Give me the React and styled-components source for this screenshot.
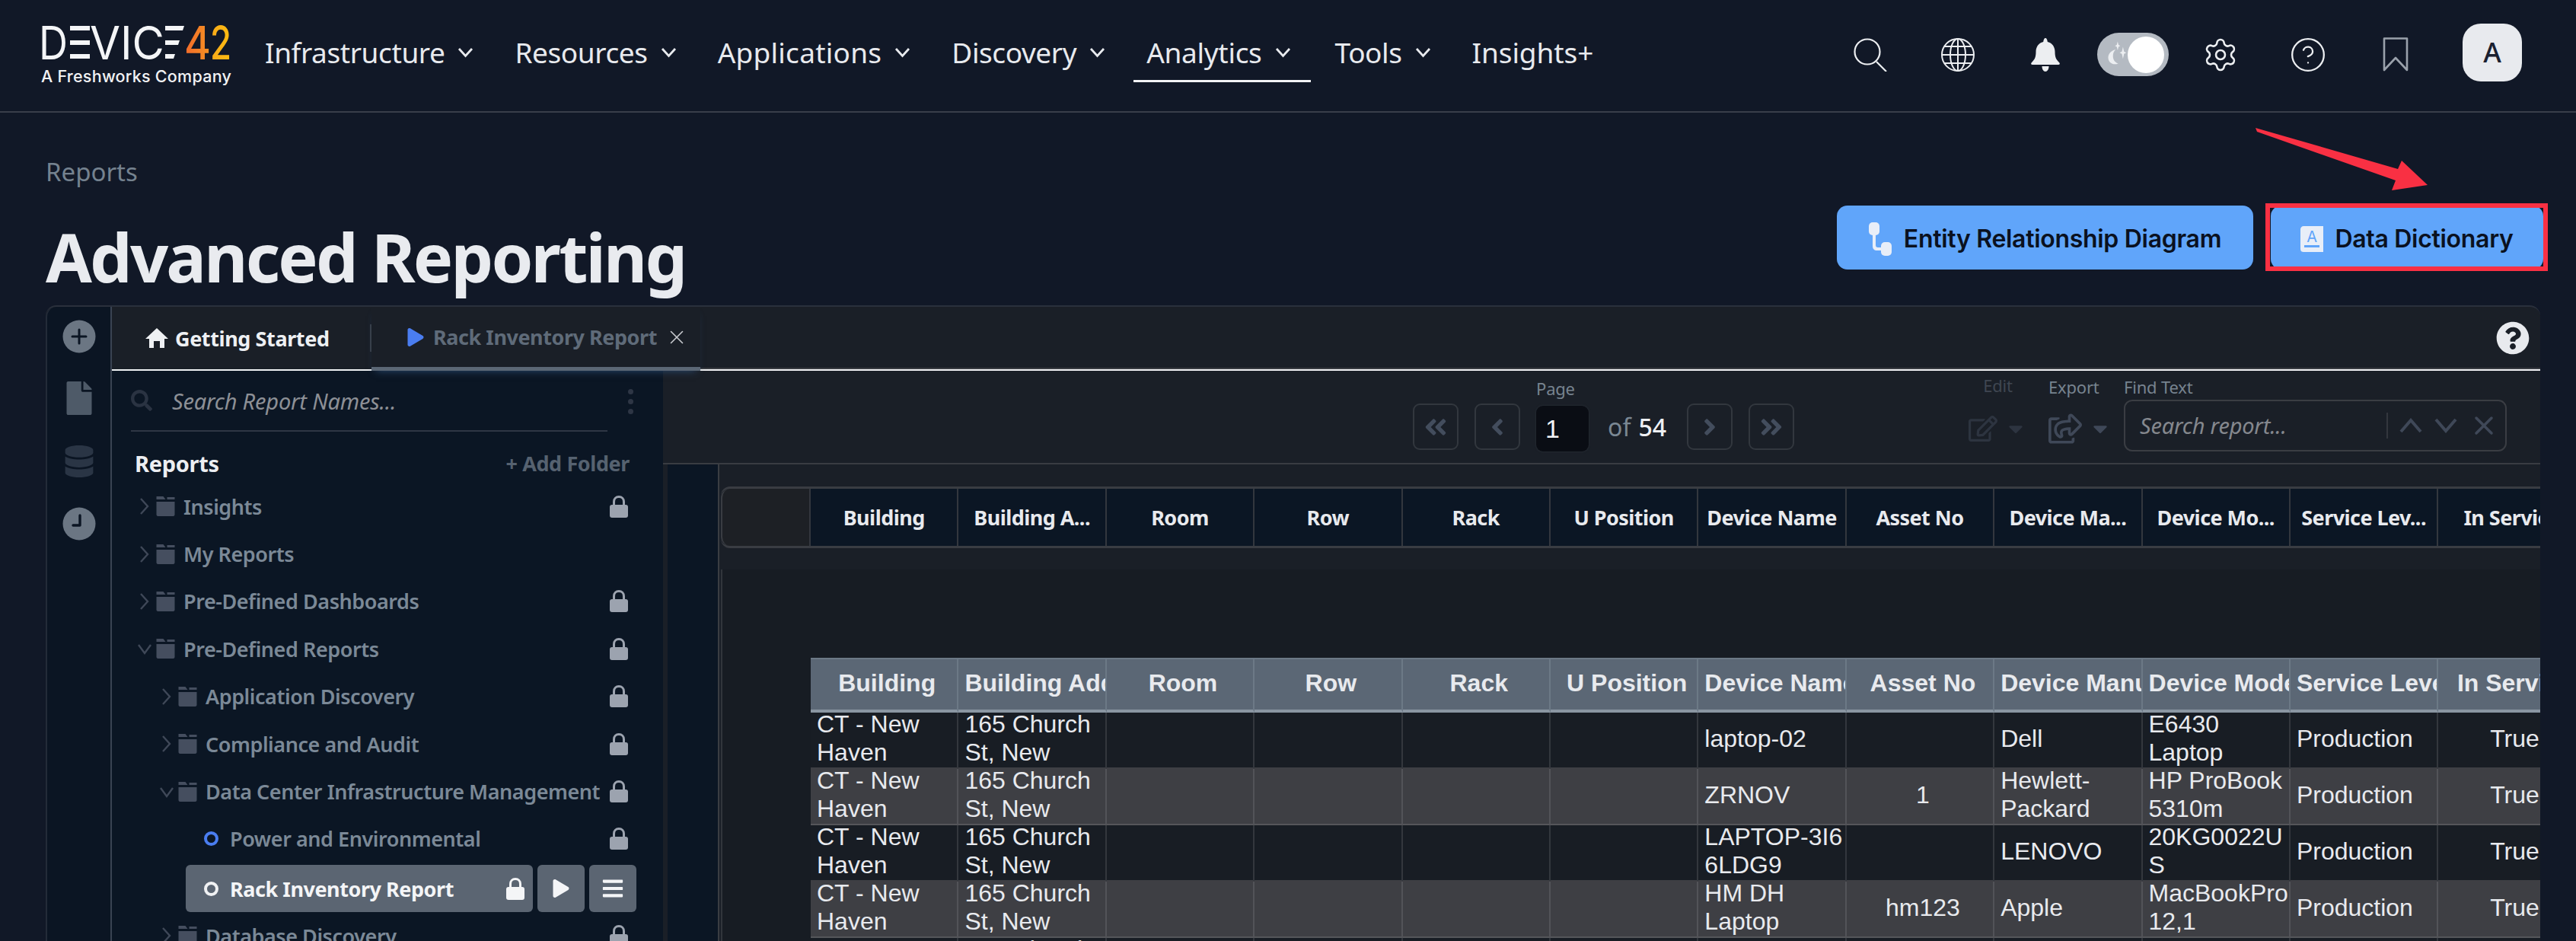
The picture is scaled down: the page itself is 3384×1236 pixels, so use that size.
import React from "react";
import styled, { createGlobalStyle } from "styled-components";
import { FaPlay, FaFile, FaDatabase, FaQuestionCircle, FaBars, FaAngleDoubleLeft, FaAngleDoubleRight, FaAngleLeft, FaAngleRight, FaRegEdit, FaRegShareSquare, FaCaretDown, FaSearch } from "react-icons/fa";
import { Settings, CircleHelp, X } from "lucide-react";

const Plex = `"Noto Sans", "Open Sans", sans-serif`;
const Global = createGlobalStyle`
  html, body { margin: 0; padding: 0; background: #111827; }
  body { width: 3384px; height: 1236px; overflow: hidden; font-family: ${Plex}; }
  * { box-sizing: border-box; }
`;

const Page = styled.div`
  position: relative; width: 3384px; height: 1236px; overflow: hidden;
  background: #111827; display: flex; flex-direction: column;
`;

/* ---------- top bar ---------- */
const Header = styled.header`
  flex: none; height: 148px; border-bottom: 2px solid #393e4a;
  display: flex; align-items: center; padding: 0 71px 0 54px;
`;
const Logo = styled.div`
  display: flex; flex-direction: column; gap: 9px; width: 250px; margin-top: -1px; color: #f4f5f7;
`;
const LogoSub = styled.span`
  font: 500 21.5px/24px Inter, sans-serif; color: #f1f2f4; white-space: nowrap; letter-spacing: .25px;
`;
const Nav = styled.nav`
  display: flex; gap: 20px; margin-left: 27px; align-self: flex-start; margin-top: 32px;
`;
const NavItem = styled.a`
  height: 76px; padding: 0 ${p => (p.$active ? 26 : 17)}px 0 17px; display: flex; align-items: center; gap: 17px;
  margin-right: ${p => (p.$active ? -5 : 0)}px;
  font: 400 37px/1 ${Plex}; letter-spacing: ${p => p.$track}px; color: #e8eaee; white-space: nowrap;
  border-bottom: 3px solid ${p => (p.$active ? "#f2f3f5" : "transparent")};
`;
const Tools = styled.div`
  margin-left: auto; display: flex; align-items: center;
`;
const ToolSlot = styled.div`
  width: 115px; display: flex; align-items: center; justify-content: center; color: ${p => p.$c || "#eceef1"}; margin-top: -3px;
`;
const Toggle = styled.div`
  width: 94px; height: 57px; border-radius: 29px; background: #b4bac2;
  display: flex; align-items: center; justify-content: space-between; padding: 0 6px 0 12px;
`;
const Knob = styled.span`
  width: 48px; height: 48px; border-radius: 50%; background: #fff; flex: none;
`;
const Avatar = styled.div`
  width: 78px; height: 76px; margin-left: 31px; margin-top: -8px; border-radius: 24px; background: #e8eaee; color: #1a2030;
  display: flex; align-items: center; justify-content: center; font: 500 36px/1 ${Plex};
`;

/* ---------- title ---------- */
const Main = styled.main`
  flex: 1; min-height: 0; padding-left: 60px; display: flex; flex-direction: column;
`;
const Head = styled.div`
  flex: none; height: 253px; display: flex; justify-content: space-between; padding-right: 43px;
`;
const TitleCol = styled.div`
  display: flex; flex-direction: column; padding-top: 55px;
`;
const Crumb = styled.div`
  font: 400 33px/45px ${Plex}; color: #75828f;
`;
const Title = styled.h1`
  margin: 34px 0 0; font: 700 88px/110px ${Plex}; letter-spacing: -2.8px; color: #e9ebef; white-space: nowrap;
`;
const Actions = styled.div`
  align-self: flex-end; display: flex; gap: 23px; margin-bottom: 47px;
`;
const Button = styled.button`
  position: relative; height: 84px; width: ${p => p.$w}px; border: 0; border-radius: 14px; background: #60a5fa;
  display: flex; align-items: center; justify-content: center; gap: 15px; padding: 3px 0 0;
  font: 600 32px/1 Inter, sans-serif; letter-spacing: -.3px; color: #0a1120; white-space: nowrap;
`;
const Highlight = styled.span`
  position: absolute; top: -3px; bottom: -2px; left: -7px; right: -6px; border: 6px solid #f93043;
`;
const Arrow = styled.svg`
  position: absolute; left: 2950px; top: 160px;
`;

/* ---------- panel ---------- */
const Panel = styled.section`
  flex: 1; min-height: 0; margin-right: 47px; display: flex; overflow: hidden;
  border-radius: 14px 14px 0 0; border-top: 2px solid #2a303c; background: #1a1f27;
`;
const Rail = styled.aside`
  flex: none; width: 87px; background: #0b1523; border-left: 2px solid #232b38; border-right: 2px solid #3a4352;
  display: flex; flex-direction: column; align-items: center; padding-top: 17px; border-top-left-radius: 14px;
`;
const RailIcon = styled.div`
  height: 44px; margin-bottom: ${p => p.$gap}px; color: ${p => p.$c}; display: flex; align-items: center;
`;
const Work = styled.div`
  flex: 1; min-width: 0; display: flex; flex-direction: column;
`;
const Tabs = styled.div`
  flex: none; height: 84px; display: flex; align-items: stretch;
`;
const HomeTab = styled.div`
  width: 341px; display: flex; align-items: center; gap: 9px; padding-left: 44px; position: relative;
  font: 700 27px/1 ${Plex}; letter-spacing: -.4px; color: #eef0f3;
  border-bottom: 2px solid #eef0f3;
`;
const TabDivider = styled.span`
  position: absolute; right: 0; top: 23px; height: 36px; width: 2px; background: #3a3f47;
`;
const ReportTab = styled.div`
  width: 432px; display: flex; align-items: center; padding-left: 46px; gap: 11px;
  font: 700 27px/1 ${Plex}; letter-spacing: -.45px; color: #5f6b79;
  border-bottom: 5px solid #5b6775; box-shadow: 0 6px 10px -6px #2a4a70; position: relative;
`;
const TabFill = styled.div`
  flex: 1; display: flex; align-items: center; justify-content: flex-end; padding-right: 14px; color: #e8eaee;
  border-bottom: 2px solid #f0f1f3; background: linear-gradient(#3a3d43, #3a3d43) bottom / 100% 2px no-repeat;
`;
const Split = styled.div`
  flex: 1; min-height: 0; display: flex;
`;

/* ---------- tree ---------- */
const Tree = styled.div`
  flex: none; width: 724px; background: #0b1624; display: flex; flex-direction: column;
`;
const TreeSearch = styled.div`
  flex: none; height: 80px; margin: 0 73px 0 25px; border-bottom: 2px solid #2f3644; display: flex; align-items: center;
  gap: 26px; position: relative; color: #8d9096; font: italic 400 29px/1 ${Plex}; letter-spacing: -.2px;
`;
const Dots = styled.span`
  position: absolute; right: -34px; top: 24px; display: flex; flex-direction: column; gap: 6px;
  i { display: block; width: 7px; height: 7px; border-radius: 50%; background: #2e3645; }
`;
const TreeHead = styled.div`
  flex: none; height: 67px; display: flex; align-items: center; justify-content: space-between; padding: 16px 44px 0 30px;
`;
const TreeTitle = styled.span`
  font: 700 29px/1 ${Plex}; letter-spacing: -.3px; color: #eceef2;
`;
const AddFolder = styled.span`
  font: 700 27px/1 ${Plex}; letter-spacing: -.4px; color: #566270;
`;
const Row = styled.div`
  flex: none; height: 62.4px; display: flex; align-items: center; padding-right: 46px; padding-left: ${p => p.$indent}px;
  font: 600 27px/1 ${Plex}; letter-spacing: -.45px; color: #7b8997; white-space: nowrap;
`;
const Caret = styled.svg`
  flex: none; width: 18px; height: 26px; margin-right: 5px; color: #3f4858;
`;
const Folder = styled.svg`
  flex: none; width: 26px; height: 26px; margin-right: 11px; color: #454e5f;
`;
const RowText = styled.span`
  flex: 1; min-width: 0;
`;
const LockIcon = styled.svg`
  flex: none; width: 24px; height: 29px; color: ${p => p.$c || "#9ca3af"};
`;
const Ring = styled.span`
  flex: none; width: 19px; height: 19px; border-radius: 50%; margin-right: 15px;
  border: 4px solid ${p => (p.$on ? "#f0f1f3" : "#4a7df0")};
`;
const ActiveRow = styled.div`
  flex: none; height: 62px; margin: 3px 35px 0 97px; display: flex; gap: 6px;
`;
const ActivePill = styled.div`
  flex: 1; background: #5b6572; border-radius: 6px; display: flex; align-items: center; padding: 0 11px 0 24px;
  font: 700 27px/1 ${Plex}; letter-spacing: -.45px; color: #f4f5f7;
`;
const ActiveBtn = styled.div`
  flex: none; width: 62px; background: #5b6572; border-radius: 6px; display: flex; align-items: center; justify-content: center; color: #f4f5f7;
`;

/* ---------- report ---------- */
const Report = styled.div`
  flex: 1; min-width: 0; display: flex; flex-direction: column;
`;
const Toolbar = styled.div`
  flex: none; height: 123px; border-bottom: 2px solid #393c42; display: flex; align-items: flex-end;
  justify-content: flex-end; padding: 0 44px 15px 0;
`;
const LabelCol = styled.div`
  display: flex; flex-direction: column; align-items: ${p => p.$align || "flex-start"}; gap: ${p => p.$gap || 6}px; margin-left: ${p => p.$ml}px;
`;
const SmallLabel = styled.span`
  font: 400 22px/24px ${Plex}; letter-spacing: -.2px; color: ${p => p.$c || "#77838f"}; white-space: nowrap;
`;
const PagerBtn = styled.div`
  width: 60px; height: 61px; margin: 0 0 2px ${p => p.$ml}px; border: 2px solid #32373e; border-radius: 9px;
  display: flex; align-items: center; justify-content: center; color: #434d5d;
`;
const PageInput = styled.div`
  width: 69px; height: 60px; background: #0a0d14; border-radius: 9px; padding-left: 12px; color: #f2f3f5;
  display: flex; align-items: center; font: 400 34px/1 "Liberation Sans", sans-serif; box-shadow: 0 0 3px #2e333b;
`;
const OfText = styled.span`
  margin: 0 0 12px 25px; font: 400 32px/40px ${Plex}; color: #7a8793; white-space: nowrap;
  b { font-weight: 500; color: #eef0f3; margin-left: 10px; }
`;
const IconMenu = styled.div`
  display: flex; align-items: center; gap: 9px; height: 50px; margin-bottom: 5px; color: ${p => p.$c};
`;
const FindBox = styled.div`
  width: 503px; height: 68px; border: 2px solid #3a3d43; border-radius: 11px; display: flex; align-items: center;
  padding: 0 8px 0 19px; color: #85888e; font: italic 400 29px/1 ${Plex}; letter-spacing: -.2px;
`;
const FindText = styled.span`
  width: 326px; height: 34px; border-right: 2px solid #33373e; line-height: 34px;
`;
const FindActions = styled.div`
  flex: 1; display: flex; align-items: center; justify-content: space-between; padding-left: 15px; color: #3f4858;
`;
const Lower = styled.div`
  flex: 1; min-height: 0; display: flex;
`;
const Strip = styled.div`
  flex: none; width: 74px; background: #0b1624; border-left: 6px solid #1a1f27; border-right: 2px solid #3a3d43;
`;
const Canvas = styled.div`
  flex: 1; min-width: 0; display: flex; flex-direction: column; padding-top: 29px;
`;
const HeadTable = styled.div`
  flex: none; display: grid; grid-template-columns: 116px repeat(12, 194.4px); height: 81px;
  border-top: 3px solid #393c42; border-bottom: 3px solid #393c42; margin-left: 2px; border-top-left-radius: 12px; border-bottom-left-radius: 12px;
`;
const HeadCorner = styled.div`
  background: #1d2025; border-left: 2px solid #393c42; border-top-left-radius: 12px; border-bottom-left-radius: 12px;
`;
const HeadCell = styled.div`
  background: #0b1624; border-left: 2px solid #33373e; display: flex; align-items: center; justify-content: center; overflow: hidden;
  font: 700 27px/1 ${Plex}; letter-spacing: -.55px; color: #e8eaee; white-space: nowrap; padding: 0 4px;
`;
const Sheet = styled.div`
  flex: 1; min-height: 0; margin-top: 28px; margin-left: 2px; border-left: 2px solid #31353b; background: #171c23; padding: 116px 0 0 116px;
`;
const DataGrid = styled.div`
  display: grid; grid-template-columns: repeat(12, 194.4px); font-family: "Liberation Sans", Arial, sans-serif; font-size: 32px; color: #e8eaee;
`;
const Th = styled.div`
  height: 72px; background: #5b6775; border-top: 2px solid #6c7986; border-bottom: 4px solid #8a96a2; border-right: 2px solid #6c7986;
  padding: 13px 0 0 8px; font-weight: 700; line-height: 37px; text-align: center; white-space: nowrap; overflow: hidden;
`;
const Td = styled.div`
  height: 74px; display: flex; align-items: center; padding: 0 0 4px 8px; line-height: 37px; white-space: pre;
  justify-content: ${p => (p.$center ? "center" : "flex-start")};
  background: ${p => (p.$alt ? "#3e3f44" : "#181d24")};
  border-right: 2px solid ${p => (p.$alt ? "#525358" : "#33373d")};
  border-bottom: 2px solid ${p => (p.$alt ? "#55565a" : "#3e3f44")};
`;

/* ---------- drawings ---------- */
const Chevron = () => (
  <svg width="21" height="14" viewBox="0 0 21 14" fill="none" stroke="currentColor" strokeWidth="2.8"><path d="M2 2l8.500 9.500L19 2" /></svg>
);
const LogoMark = () => (
  <svg width="250" height="46" viewBox="0 0 250 46">
    <defs>
      <linearGradient id="four" x1="0" x2="1"><stop offset="0" stopColor="#f26a2b" /><stop offset="1" stopColor="#f59222" /></linearGradient>
      <linearGradient id="two" x1="0" x2="1"><stop offset="0" stopColor="#f8a91a" /><stop offset="1" stopColor="#fdbd10" /></linearGradient>
    </defs>
    <g fill="#f4f5f7" fontFamily="Inter, sans-serif" fontSize="61" fontWeight="400">
      <text x="-3" y="45" textLength="38" lengthAdjust="spacingAndGlyphs">D</text>
      <rect x="38" y="1" width="26" height="6" /><rect x="38" y="20" width="26" height="6" /><rect x="38" y="38" width="26" height="6" />
      <text x="64" y="45" textLength="98" lengthAdjust="spacingAndGlyphs">VIC</text>
      <polygon points="163,1 188,1 186,7 163,7" /><polygon points="163,20 182,20 180,26 163,26" /><polygon points="163,38 176,38 174,44 163,44" />
    </g>
    <text x="188" y="45" fontFamily="Inter, sans-serif" fontSize="61" fontWeight="500" fill="url(#four)" textLength="35" lengthAdjust="spacingAndGlyphs">4</text>
    <text x="222" y="45" fontFamily="Inter, sans-serif" fontSize="61" fontWeight="500" fill="url(#two)" textLength="28" lengthAdjust="spacingAndGlyphs">2</text>
  </svg>
);
const SearchGlyph = () => (
  <svg width="44" height="44" viewBox="0 0 44 44" fill="none" stroke="currentColor" strokeWidth="2.2">
    <circle cx="18" cy="18" r="16.500" /><path d="M30 31l13 13" />
  </svg>
);
const Globe = () => (
  <svg width="46" height="46" viewBox="0 0 46 46" fill="none" stroke="currentColor" strokeWidth="2">
    <circle cx="23" cy="23" r="21" /><ellipse cx="23" cy="23" rx="10" ry="21" /><path d="M23 2v42M2 23h42M5 12h36M5 34h36" />
  </svg>
);
const Bell = () => (
  <svg width="40" height="44" viewBox="0 0 40 44" fill="currentColor">
    <path d="M20 0c1.500 0 2.500 2 2.800 5 6.500 1.500 9.700 7 9.700 13 0 7 1.500 10 5.500 14 1.500 1.500 1 3-1 3H3c-2 0-2.500-1.500-1-3 4-4 5.500-7 5.500-14 0-6 3.200-11.500 9.700-13C17.500 2 18.500 0 20 0zM15.500 37h9c0 4-2 7-4.500 7s-4.500-3-4.500-7z" />
  </svg>
);
const Moon = () => (
  <svg width="32" height="44" viewBox="0 0 32 44" fill="#eceef1">
    <path d="M14 14C6 16 2 22 3 28c1 6 7 10 15 7-5-1-8-6-8-11 0-4 1-7 4-10z" />
    <path d="M17 2l1.300 5 2.700 1.500-2.700 1.500-1.300 5-1.300-5L13 8.500 15.700 7zM25 10l1.600 7 3.400 1.800-3.400 1.800L25 28l-1.600-7.400-3.400-1.800 3.400-1.800z" />
  </svg>
);
const BookmarkGlyph = () => (
  <svg width="36" height="45" viewBox="0 0 36 45" fill="none" stroke="currentColor" strokeWidth="2.6">
    <path d="M3 1.500h30V43L18 27 3 43z" strokeLinejoin="round" />
  </svg>
);
const RouteIcon = () => (
  <svg width="31" height="44" viewBox="0 0 31 44" fill="#e8eef8">
    <rect x="0" y="0" width="14" height="17" rx="5" /><rect x="16" y="26" width="14" height="18" rx="5" />
    <path d="M5 15h4v15c0 2 1 3 3 3h6v4h-7c-4 0-6-2-6-6z" />
  </svg>
);
const BookIcon = () => (
  <svg width="30" height="34" viewBox="0 0 30 34">
    <path fill="#e8eef8" d="M4 0h26v34H4c-2 0-4-1-4-4V4c0-2 2-4 4-4z" />
    <rect x="5" y="25" width="20" height="3" fill="#60a5fa" />
    <text x="15" y="21" fontFamily="Inter, sans-serif" fontSize="20" fontWeight="400" textAnchor="middle" fill="#60a5fa">A</text>
  </svg>
);
const CirclePlus = () => (
  <svg width="44" height="44" viewBox="0 0 44 44">
    <circle cx="22" cy="22" r="21.500" fill="currentColor" />
    <path d="M22 13v18M13 22h18" stroke="#0b1523" strokeWidth="3" strokeLinecap="round" />
  </svg>
);
const ClockGlyph = () => (
  <svg width="44" height="44" viewBox="0 0 44 44">
    <circle cx="22" cy="22" r="21.500" fill="currentColor" />
    <path d="M23 11v13H14" fill="none" stroke="#0b1523" strokeWidth="3.400" strokeLinecap="round" strokeLinejoin="round" />
  </svg>
);
const HomeGlyph = () => (
  <svg width="30" height="26" viewBox="0 0 30 26" fill="currentColor">
    <path d="M15 0l15 14h-5v12h-6v-9h-8v9H5V14H0z" />
  </svg>
);
const FindChevron = ({ up }) => (
  <svg width="30" height="20" viewBox="0 0 30 20" fill="none" stroke="currentColor" strokeWidth="4">
    <path d={up ? "M2 18L15 3l13 15" : "M2 2l13 15L28 2"} />
  </svg>
);
const CaretIcon = ({ open }) => (
  <Caret viewBox="0 0 18 26" fill="none" stroke="currentColor" strokeWidth="2.400">
    {open ? <path d="M1 8l8 11 8-11" /> : <path d="M4 3l9 10-9 10" />}
  </Caret>
);
const FolderIcon = () => (
  <Folder viewBox="0 0 25 26" fill="currentColor">
    <path d="M1 0h9l3 4H1zM1 7h24v17c0 1-1 2-2 2H3c-1 0-2-1-2-2zM15 1h10v3H15z" />
  </Folder>
);
const Lock = ({ c }) => (
  <LockIcon $c={c} viewBox="0 0 24 29">
    <path fill="none" stroke="currentColor" strokeWidth="3" d="M5.500 14V8c0-4 2.700-6.500 6.500-6.500S18.500 4 18.500 8v6" />
    <rect x="0" y="12" width="24" height="17" rx="3" fill="currentColor" />
  </LockIcon>
);

/* ---------- data ---------- */
const navItems = [
  { label: "Infrastructure", menu: true, track: -0.4 },
  { label: "Resources", menu: true, track: -0.4 },
  { label: "Applications", menu: true, track: 0.25 },
  { label: "Discovery", menu: true, track: -0.4 },
  { label: "Analytics", menu: true, track: -0.3, active: true },
  { label: "Tools", menu: true, track: -0.4 },
  { label: "Insights+", menu: false, track: -0.1 },
];
const headLabels = ["Building", "Building A...", "Room", "Row", "Rack", "U Position", "Device Name", "Asset No", "Device Ma...", "Device Mo...", "Service Lev...", "In Service"];
const gridLabels = ["Building", "Building Address", "Room", "Row", "Rack", "U Position", "Device Name", "Asset No", "Device Manufacturer", "Device Model", "Service Level", "In Service"];
const rows = [
  ["laptop-02", "", "Dell", "E6430\nLaptop"],
  ["ZRNOV", "1", "Hewlett-\nPackard", "HP ProBook\n5310m"],
  ["LAPTOP-3I6\n6LDG9", "", "LENOVO", "20KG0022U\nS"],
  ["HM DH\nLaptop", "hm123", "Apple", "MacBookPro\n12,1"],
  ["", "", "", ""],
];
const treeRows = [
  ["Insights", 34, false, true], ["My Reports", 34, false, false], ["Pre-Defined Dashboards", 34, false, true], ["Pre-Defined Reports", 34, true, true],
  ["Application Discovery", 63, false, true], ["Compliance and Audit", 63, false, true], ["Data Center Infrastructure Management", 63, true, true],
];

export default function App() {
  return (
    <Page>
      <Global />
      <Header>
        <Logo>
          <LogoMark />
          <LogoSub>A Freshworks Company</LogoSub>
        </Logo>
        <Nav>
          {navItems.map(({ label, menu, track, active }) => (
            <NavItem key={label} $active={active} $track={track}>{label}{menu ? <Chevron /> : null}</NavItem>
          ))}
        </Nav>
        <Tools>
          <ToolSlot><SearchGlyph /></ToolSlot>
          <ToolSlot><Globe /></ToolSlot>
          <ToolSlot><Bell /></ToolSlot>
          <ToolSlot><Toggle><Moon /><Knob /></Toggle></ToolSlot>
          <ToolSlot><Settings size={48} strokeWidth={1.3} /></ToolSlot>
          <ToolSlot><CircleHelp size={50} strokeWidth={1.1} /></ToolSlot>
          <ToolSlot $c="#9aa1ab"><BookmarkGlyph /></ToolSlot>
          <Avatar>A</Avatar>
        </Tools>
      </Header>
      <Main>
        <Head>
          <TitleCol>
            <Crumb>Reports</Crumb>
            <Title>Advanced Reporting</Title>
          </TitleCol>
          <Actions>
            <Button $w={547}><RouteIcon />Entity Relationship Diagram</Button>
            <Button $w={358}><BookIcon />Data Dictionary<Highlight /></Button>
          </Actions>
        </Head>
        <Panel>
          <Rail>
            <RailIcon $c="#6b7683" $gap={37}><CirclePlus /></RailIcon>
            <RailIcon $c="#4e5a68" $gap={39}><FaFile size={44} /></RailIcon>
            <RailIcon $c="#2a3545" $gap={38}><FaDatabase size={42} /></RailIcon>
            <RailIcon $c="#6b7683" $gap={0}><ClockGlyph /></RailIcon>
          </Rail>
          <Work>
            <Tabs>
              <HomeTab><HomeGlyph />Getting Started<TabDivider /></HomeTab>
              <ReportTab><FaPlay size={24} color="#4a7df0" />Rack Inventory Report<X size={30} strokeWidth={1.3} color="#c9ccd1" /></ReportTab>
              <TabFill><FaQuestionCircle size={44} /></TabFill>
            </Tabs>
            <Split>
              <Tree>
                <TreeSearch>
                  <FaSearch size={28} color="#2a3342" />
                  Search Report Names...
                  <Dots><i /><i /><i /></Dots>
                </TreeSearch>
                <TreeHead>
                  <TreeTitle>Reports</TreeTitle>
                  <AddFolder>+ Add Folder</AddFolder>
                </TreeHead>
                {treeRows.map(([label, indent, open, locked]) => (
                  <Row key={label} $indent={indent}>
                    <CaretIcon open={open} /><FolderIcon /><RowText>{label}</RowText>{locked ? <Lock /> : null}
                  </Row>
                ))}
                <Row $indent={121}><Ring /><RowText>Power and Environmental</RowText><Lock /></Row>
                <ActiveRow>
                  <ActivePill><Ring $on /><RowText>Rack Inventory Report</RowText><Lock c="#f4f5f7" /></ActivePill>
                  <ActiveBtn><FaPlay size={24} /></ActiveBtn>
                  <ActiveBtn><FaBars size={30} /></ActiveBtn>
                </ActiveRow>
                <Row $indent={63}><CaretIcon /><FolderIcon /><RowText>Database Discovery</RowText><Lock /></Row>
              </Tree>
              <Report>
                <Toolbar>
                  <PagerBtn $ml={0}><FaAngleDoubleLeft size={34} /></PagerBtn>
                  <PagerBtn $ml={21}><FaAngleLeft size={34} /></PagerBtn>
                  <LabelCol $ml={21} $gap={11}>
                    <SmallLabel>Page</SmallLabel>
                    <PageInput>1</PageInput>
                  </LabelCol>
                  <OfText>of<b>54</b></OfText>
                  <PagerBtn $ml={27}><FaAngleRight size={34} /></PagerBtn>
                  <PagerBtn $ml={21}><FaAngleDoubleRight size={34} /></PagerBtn>
                  <LabelCol $ml={229} $align="center" $gap={20}>
                    <SmallLabel $c="#3f4651">Edit</SmallLabel>
                    <IconMenu $c="#2d3440"><FaRegEdit size={38} /><FaCaretDown size={30} /></IconMenu>
                  </LabelCol>
                  <LabelCol $ml={28} $gap={18}>
                    <SmallLabel>Export</SmallLabel>
                    <IconMenu $c="#3f4858"><FaRegShareSquare size={44} /><FaCaretDown size={30} /></IconMenu>
                  </LabelCol>
                  <LabelCol $ml={16} $gap={5}>
                    <SmallLabel>Find Text</SmallLabel>
                    <FindBox>
                      <FindText>Search report...</FindText>
                      <FindActions><FindChevron up /><FindChevron /><X size={40} strokeWidth={2.1} /></FindActions>
                    </FindBox>
                  </LabelCol>
                </Toolbar>
                <Lower>
                  <Strip />
                  <Canvas>
                    <HeadTable>
                      <HeadCorner />
                      {headLabels.map(label => <HeadCell key={label}>{label}</HeadCell>)}
                    </HeadTable>
                    <Sheet>
                      <DataGrid>
                        {gridLabels.map(label => <Th key={label}>{label}</Th>)}
                        {rows.map(([name, asset, maker, model], i) => {
                          const alt = i % 2 === 1;
                          return (
                            <React.Fragment key={i}>
                              <Td $alt={alt}>{"CT - New\nHaven"}</Td>
                              <Td $alt={alt}>{"165 Church\nSt, New"}</Td>
                              <Td $alt={alt} /><Td $alt={alt} /><Td $alt={alt} /><Td $alt={alt} />
                              <Td $alt={alt}>{name}</Td>
                              <Td $alt={alt} $center>{asset}</Td>
                              <Td $alt={alt}>{maker}</Td>
                              <Td $alt={alt}>{model}</Td>
                              <Td $alt={alt}>Production</Td>
                              <Td $alt={alt} $center>True</Td>
                            </React.Fragment>
                          );
                        })}
                      </DataGrid>
                    </Sheet>
                  </Canvas>
                </Lower>
              </Report>
            </Split>
          </Work>
        </Panel>
      </Main>
      <Arrow width="250" height="100" viewBox="0 0 250 100">
        <polygon fill="#f93043" points="13,8 200,62 205,51 239,83 192,90 197,77 15,13" />
      </Arrow>
    </Page>
  );
}
